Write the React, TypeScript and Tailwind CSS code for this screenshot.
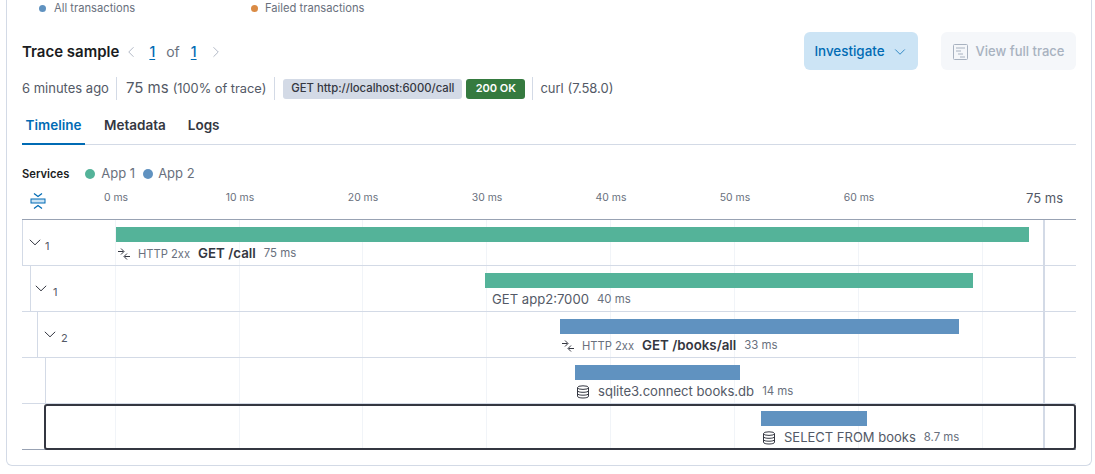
import { ChevronDown, ChevronLeft, ChevronRight } from "lucide-react";

const gridLines = [0, 124, 247, 371, 495, 619, 743, 867];
const ticks = [
  { label: "0 ms", x: 116 },
  { label: "10 ms", x: 240 },
  { label: "20 ms", x: 363 },
  { label: "30 ms", x: 487 },
  { label: "40 ms", x: 611 },
  { label: "50 ms", x: 735 },
  { label: "60 ms", x: 859 },
];

function Chevron() {
  return (
    <svg width="12" height="7" viewBox="0 0 12 7" fill="none" stroke="#343741" strokeWidth="1" className="shrink-0">
      <path d="M0.8 0.8 L6 5.8 L11.2 0.8" />
    </svg>
  );
}

function HttpIcon() {
  return (
    <svg width="12" height="12" viewBox="0 0 12 12" fill="none" stroke="#343741" strokeWidth="1" className="shrink-0">
      <path d="M0 3.5 H5.5 M3 0.5 L6 3.5 L3 6.5" />
      <path d="M12 8.5 H6.5 M9 5.5 L6 8.5 L9 11.5" />
    </svg>
  );
}

function DbIcon() {
  return (
    <svg width="14" height="14" viewBox="0 0 14 14" fill="none" stroke="#343741" strokeWidth="1" className="shrink-0">
      <ellipse cx="7" cy="2.6" rx="5.5" ry="1.8" />
      <path d="M1.5 2.6 V11.2 C1.5 12.4 4 13 7 13 C10 13 12.5 12.4 12.5 11.2 V2.6" />
      <path d="M1.5 5.6 C1.5 6.8 4 7.3 7 7.3 C10 7.3 12.5 6.8 12.5 5.6" />
      <path d="M1.5 8.5 C1.5 9.7 4 10.2 7 10.2 C10 10.2 12.5 9.7 12.5 8.5" />
    </svg>
  );
}

function CollapseIcon() {
  return (
    <svg width="16" height="16" viewBox="0 0 16 16" fill="none" stroke="#006bb4" strokeWidth="1.2">
      <path d="M4 0.5 L8 3.5 L12 0.5" />
      <rect x="1" y="6" width="14" height="4" fill="#cce4f5" strokeWidth="1" />
      <path d="M4 15.5 L8 12.5 L12 15.5" />
    </svg>
  );
}

function TraceDocIcon() {
  return (
    <svg width="15" height="16" viewBox="0 0 15 16" fill="none" stroke="#a8b2c0" strokeWidth="1">
      <rect x="0.5" y="0.5" width="14" height="15" rx="1" />
      <path d="M3 4 H12 M3 7 H8 M5 10 H10 M7 13 H12" />
    </svg>
  );
}

function Meta({ children }: { children: React.ReactNode }) {
  return <span className="text-[11.4px] text-[#69707d] ml-2 whitespace-nowrap">{children}</span>;
}

function Sep() {
  return <div className="w-px h-[23px] bg-[#d3dae6]" />;
}

type Row = {
  indent: string;
  pad: string;
  count?: string;
  countGap?: string;
  bar: string;
  left: number;
  width: number;
  label: React.ReactNode;
  labelPad: number;
  duration: string;
};

const rows: Row[] = [
  {
    indent: "pl-0",
    pad: "pl-[6px]",
    count: "1",
    countGap: "ml-[4px]",
    bar: "bg-[#54b399]",
    left: 0,
    width: 913,
    labelPad: 2,
    duration: "75 ms",
    label: (
      <>
        <HttpIcon />
        <span className="text-[11.2px] text-[#69707d] ml-2">HTTP 2xx</span>
        <span className="text-[13.3px] font-semibold text-[#343741] ml-2">GET /call</span>
      </>
    ),
  },
  {
    indent: "pl-[8px]",
    pad: "pl-[4px]",
    count: "1",
    countGap: "ml-[6px]",
    bar: "bg-[#54b399]",
    left: 369,
    width: 488,
    labelPad: 7,
    duration: "40 ms",
    label: <span className="text-[13.1px] text-[#535966]">GET app2:7000</span>,
  },
  {
    indent: "pl-[15px]",
    pad: "pl-[6px]",
    count: "2",
    countGap: "ml-[5px]",
    bar: "bg-[#6092c0]",
    left: 444,
    width: 399,
    labelPad: 2,
    duration: "33 ms",
    label: (
      <>
        <HttpIcon />
        <span className="text-[11.2px] text-[#69707d] ml-2">HTTP 2xx</span>
        <span className="text-[13.3px] font-semibold text-[#343741] ml-2">GET /books/all</span>
      </>
    ),
  },
  {
    indent: "pl-[23px]",
    pad: "pl-0",
    bar: "bg-[#6092c0]",
    left: 459,
    width: 165,
    labelPad: 1,
    duration: "14 ms",
    label: (
      <>
        <DbIcon />
        <span className="text-[13.1px] text-[#535966] ml-2">sqlite3.connect books.db</span>
      </>
    ),
  },
  {
    indent: "pl-[22px]",
    pad: "pl-0",
    bar: "bg-[#6092c0]",
    left: 645,
    width: 106,
    labelPad: 1,
    duration: "8.7 ms",
    label: (
      <>
        <DbIcon />
        <span className="text-[13px] text-[#535966] ml-2">SELECT FROM books</span>
      </>
    ),
  },
];

function TraceRow({ row, last }: { row: Row; last: boolean }) {
  return (
    <div className={`flex h-[46px] border-b ${last ? "border-[#98a2b3]" : "border-[#d3dae6]"}`}>
      <div className={`w-[94px] shrink-0 ${row.indent}`}>
        <div className={`h-full flex items-center ${last ? "" : "border-l border-[#d3dae6]"} ${row.pad}`}>
          {row.count && (
            <>
              <Chevron />
              <span className={`text-[11px] text-[#535966] mt-[8px] ${row.countGap}`}>{row.count}</span>
            </>
          )}
        </div>
      </div>
      <div className="flex-1 pt-[7px]">
        <div className={`h-[15px] ${row.bar}`} style={{ marginLeft: row.left, width: row.width }} />
        <div className="flex items-center h-[18px] mt-[3px]" style={{ marginLeft: row.left + row.labelPad }}>
          {row.label}
          <Meta>{row.duration}</Meta>
        </div>
      </div>
    </div>
  );
}

export default function App() {
  return (
    <div className="h-[474px] bg-white text-[#343741] overflow-hidden" style={{ fontFamily: "Inter, sans-serif" }}>
      <div className="ml-[6px] w-[1086px] h-[466px] border-x border-b border-[#d3dae6] rounded-b-md px-[15px]">
        {/* Legend */}
        <div className="flex items-center h-[16px] pt-[1px] text-[11.2px] text-[#69707d]">
          <span className="ml-[17px] w-[7px] h-[7px] rounded-full bg-[#6092c0]" />
          <span className="ml-[8px] w-[197px]">All transactions</span>
          <span className="w-[7px] h-[7px] rounded-full bg-[#da8b45]" />
          <span className="ml-[4px] pl-[3px]">Failed transactions</span>
        </div>

        {/* Header */}
        <div className="flex items-center justify-between mt-[16px] h-[38px]">
          <div className="flex items-center pt-[2px]">
            <span className="text-[15px] font-semibold text-[#1a1c21]">Trace sample</span>
            <ChevronLeft size={18} strokeWidth={1} className="ml-[3px] text-[#98a2b3]" />
            <span className="ml-[9px] text-sm text-[#006bb4] font-medium underline underline-offset-2">1</span>
            <span className="ml-[11px] text-sm text-[#69707d]">of</span>
            <span className="ml-[11px] text-sm text-[#006bb4] font-medium underline underline-offset-2">1</span>
            <ChevronRight size={18} strokeWidth={1} className="ml-[10px] text-[#98a2b3]" />
          </div>
          <div className="flex items-center gap-[23px]">
            <button className="w-[114px] h-[38px] pt-[1px] pl-[1px] rounded-md bg-[#cce4f5] text-[#006bb4] text-[13.4px] font-medium flex items-center justify-center gap-[6px]">
              Investigate
              <ChevronDown size={18} strokeWidth={1} />
            </button>
            <button className="w-[135px] h-[38px] pt-[1px] rounded-md bg-[#f5f7fa] text-[#a8b2c0] text-[13px] font-medium flex items-center justify-center gap-[8px]">
              <TraceDocIcon />
              View full trace
            </button>
          </div>
        </div>

        {/* Summary */}
        <div className="flex items-center h-[23px] mt-[7px] text-[13px] text-[#535966]">
          <span>6 minutes ago</span>
          <div className="ml-[7px]"><Sep /></div>
          <span className="ml-[9px] text-[15px]">75 ms</span>
          <span className="ml-[4px] text-[12.8px]">(100% of trace)</span>
          <div className="ml-[8px]"><Sep /></div>
          <span className="ml-[8px] h-[20px] px-2 rounded-[3px] bg-[#d3dae6] text-[11.3px] font-medium text-[#343741] flex items-center">GET http://localhost:6000/call</span>
          <span className="ml-[4px] h-[20px] w-[59px] rounded-[3px] bg-[#357a3f] text-[11px] font-semibold text-white flex items-center justify-center">200 OK</span>
          <div className="ml-[7px]"><Sep /></div>
          <span className="ml-[7px] text-[#535966]">curl (7.58.0)</span>
        </div>

        {/* Tabs */}
        <div className="flex h-[36px] mt-[9px] border-b border-[#d3dae6] text-[13.5px] font-semibold">
          <div className="w-[63px] flex items-center justify-center h-[36px] pb-[2px] border-b-2 border-[#006bb4] text-[#006bb4]">Timeline</div>
          <div className="ml-[19px] pb-[2px] flex items-center text-[#343741]">Metadata</div>
          <div className="ml-[22px] pb-[2px] flex items-center text-[#343741]">Logs</div>
        </div>

        {/* Services */}
        <div className="flex items-center h-[16px] mt-[21px]">
          <span className="text-[11.2px] font-semibold text-[#1a1c21]">Services</span>
          <span className="ml-[16px] w-[10px] h-[10px] rounded-full bg-[#54b399]" />
          <span className="ml-[6px] text-[13px] text-[#69707d]">App 1</span>
          <span className="ml-[8px] w-[10px] h-[10px] rounded-full bg-[#6092c0]" />
          <span className="ml-[5px] text-[13px] text-[#69707d]">App 2</span>
        </div>

        {/* Time axis */}
        <div className="relative h-[37px]">
          <div className="absolute left-[8px] top-[11px]"><CollapseIcon /></div>
          {ticks.map((t) => (
            <span
              key={t.label}
              className="absolute top-[8px] -translate-x-1/2 text-[10.4px] text-[#69707d] whitespace-nowrap"
              style={{ left: t.x - 22 }}
            >
              {t.label}
            </span>
          ))}
          <span className="absolute right-[13px] top-[7px] text-[13px] text-[#535966]">75 ms</span>
        </div>

        {/* Waterfall */}
        <div className="relative border-t border-[#98a2b3]">
          {gridLines.map((x) => (
            <div key={x} className="absolute top-0 bottom-0 w-px bg-[#f1f4f8]" style={{ left: 93 + x }} />
          ))}
          <div className="absolute top-0 bottom-0 left-[1021px] w-[2px] bg-[#d3dae6]" />
          <div className="absolute top-0 left-0 w-px h-[46px] bg-[#d3dae6]" />
          <div className="relative">
            {rows.map((row, i) => (
              <TraceRow key={i} row={row} last={i === rows.length - 1} />
            ))}
          </div>
          <div className="absolute left-[22px] right-0 bottom-0 h-[46px] border-2 border-[#343741] rounded-[3px]" />
        </div>
      </div>
    </div>
  );
}
